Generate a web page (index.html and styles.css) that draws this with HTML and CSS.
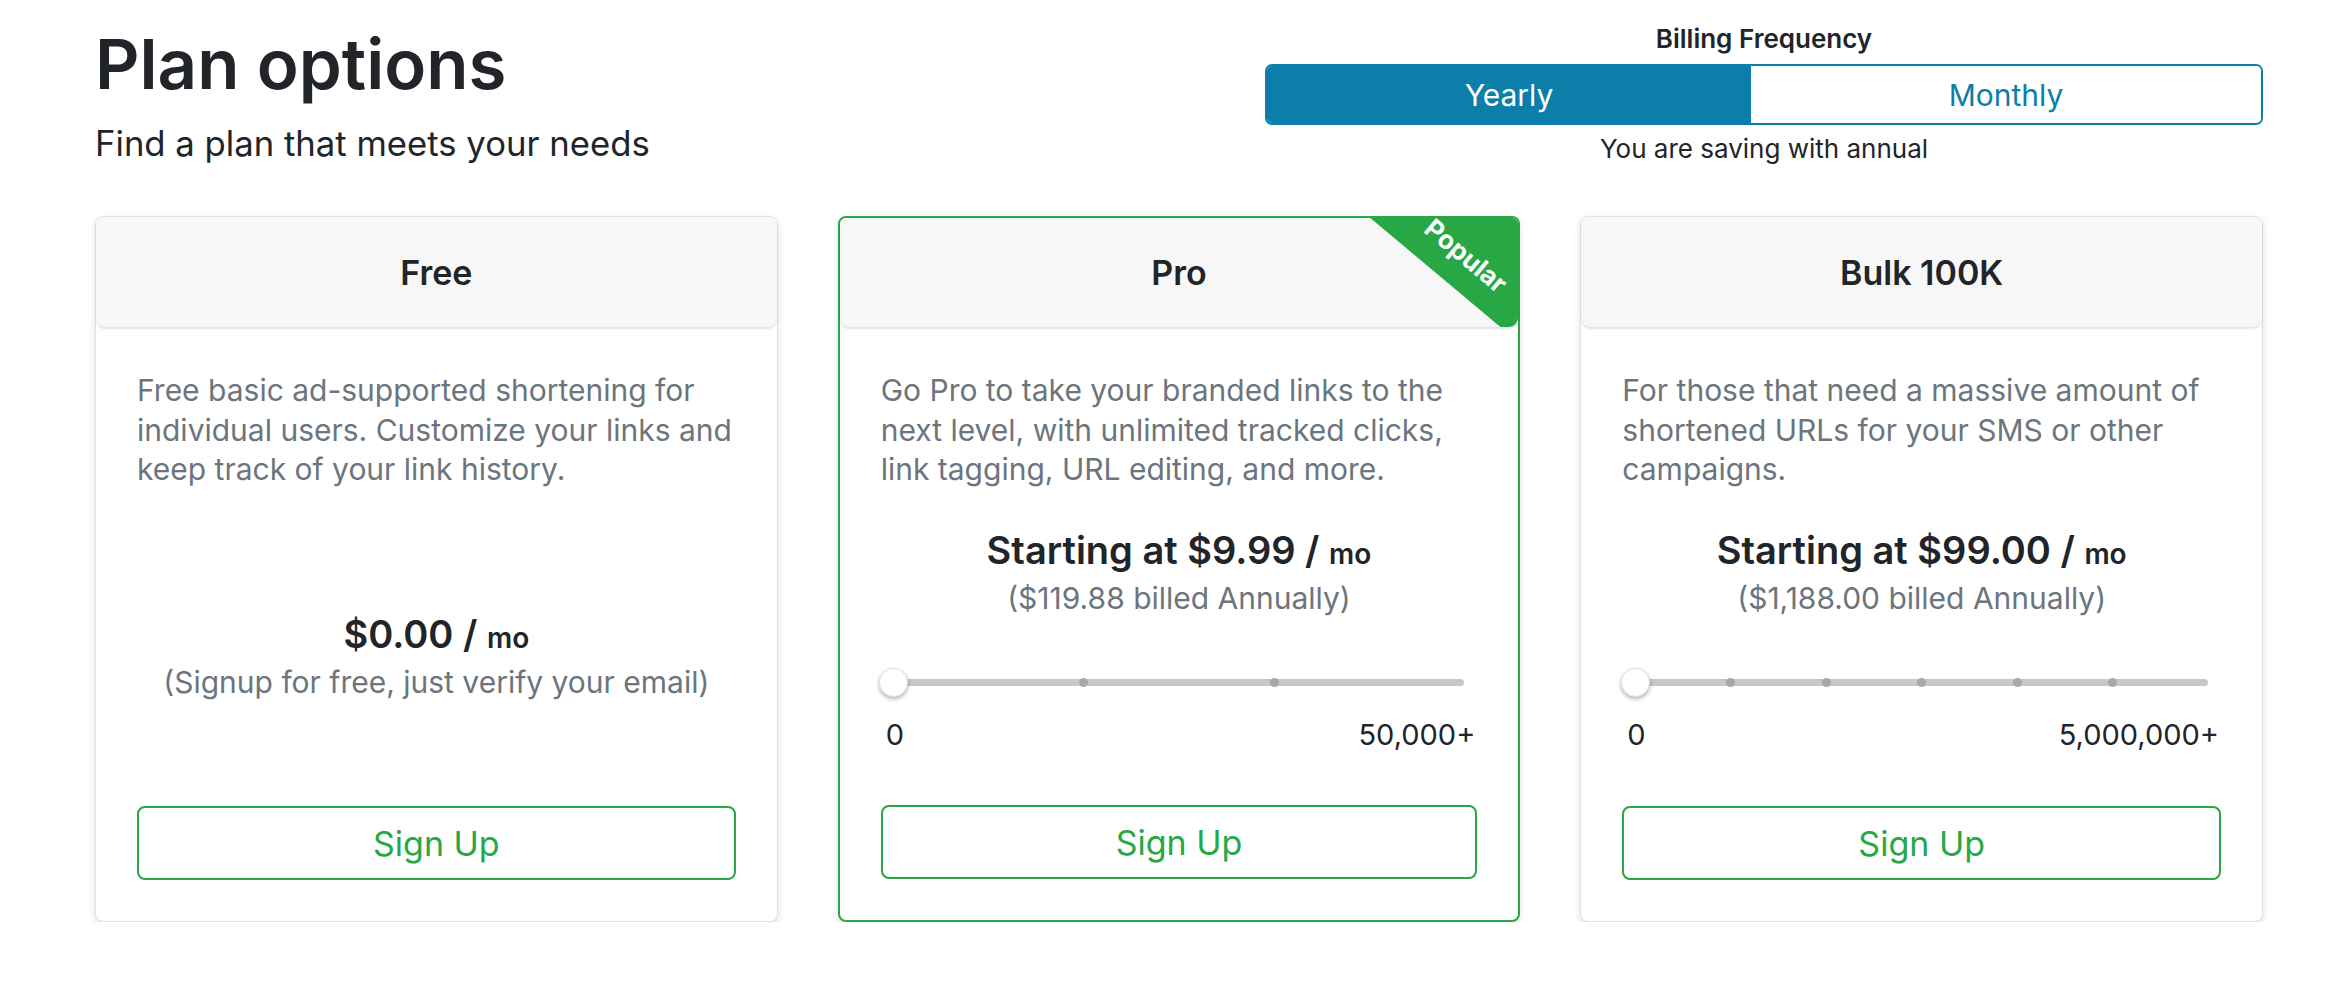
FILE: index.html
```html
<!DOCTYPE html>
<html lang="en">
<head>
<meta charset="utf-8">
<title>Plan options</title>
<link rel="stylesheet" href="styles.css">
</head>
<body>
<div class="page">
  <div class="top">
    <div class="intro">
      <h1 class="title">Plan options</h1>
      <p class="subtitle">Find a plan that meets your needs</p>
    </div>
    <div class="billing">
      <div class="billing-label">Billing Frequency</div>
      <div class="toggle">
        <div class="toggle-btn active">Yearly</div>
        <div class="toggle-btn">Monthly</div>
      </div>
      <div class="saving">You are saving with annual</div>
    </div>
  </div>

  <div class="plans">
    <div class="card">
      <div class="card-head">Free</div>
      <div class="card-body">
        <p class="desc">Free basic ad-supported shortening for individual users. Customize your links and keep track of your link history.</p>
        <div class="free-price">
          <div class="price">$0.00 / <span class="unit">mo</span></div>
          <div class="billed">(Signup for free, just verify your email)</div>
        </div>
        <div class="signup">Sign Up</div>
      </div>
    </div>

    <div class="card featured">
      <div class="card-head">Pro
        <div class="ribbon"></div>
      </div>
      <div class="ribbon-label">Popular</div>
      <div class="card-body">
        <p class="desc">Go Pro to take your branded links to the next level, with unlimited tracked clicks, link tagging, URL editing, and more.</p>
        <div class="price tier">Starting at $9.99 / <span class="unit">mo</span></div>
        <div class="billed">($119.88 billed Annually)</div>
        <div class="slider">
          <div class="track">
            <span class="tick" style="left:33.333%"></span>
            <span class="tick" style="left:66.667%"></span>
            <span class="thumb"></span>
          </div>
        </div>
        <div class="range-labels"><span>0</span><span>50,000+</span></div>
        <div class="signup">Sign Up</div>
      </div>
    </div>

    <div class="card">
      <div class="card-head">Bulk 100K</div>
      <div class="card-body">
        <p class="desc">For those that need a massive amount of shortened URLs for your SMS or other campaigns.</p>
        <div class="price tier">Starting at $99.00 / <span class="unit">mo</span></div>
        <div class="billed">($1,188.00 billed Annually)</div>
        <div class="slider">
          <div class="track">
            <span class="tick" style="left:16.667%"></span>
            <span class="tick" style="left:33.333%"></span>
            <span class="tick" style="left:50%"></span>
            <span class="tick" style="left:66.667%"></span>
            <span class="tick" style="left:83.333%"></span>
            <span class="thumb"></span>
          </div>
        </div>
        <div class="range-labels"><span>0</span><span>5,000,000+</span></div>
        <div class="signup">Sign Up</div>
      </div>
    </div>
  </div>
</div>
</body>
</html>
```

FILE: styles.css
```css
* { box-sizing: border-box; }

body {
  margin: 0;
  background: #ffffff;
  font-family: Inter, "Noto Sans", sans-serif;
  color: #212529;
}

.page {
  width: 2332px;
  padding: 0 69px 0 95px;
}

.top {
  display: flex;
  justify-content: space-between;
  align-items: flex-start;
}

.title {
  margin: 21px 0 0;
  font-size: 69px;
  line-height: 86px;
  font-weight: 600;
}

.subtitle {
  margin: 15px 0 0;
  font-size: 34.7px;
  line-height: 42px;
  font-weight: 400;
}

.billing {
  width: 998px;
  padding-top: 23px;
  display: flex;
  flex-direction: column;
  align-items: center;
}

.billing-label {
  font-size: 26px;
  line-height: 32px;
  font-weight: 600;
}

.toggle {
  margin-top: 9px;
  width: 100%;
  height: 61px;
  display: flex;
  border: 2px solid #0b7eaa;
  border-radius: 7px;
  overflow: hidden;
}

.toggle-btn {
  flex: 1 1 auto;
  display: flex;
  align-items: center;
  justify-content: center;
  font-size: 30px;
  color: #0b7eaa;
  background: #ffffff;
}

.toggle-btn.active {
  background: #0b7eaa;
  color: #ffffff;
}

.saving {
  margin-top: 8px;
  font-size: 26px;
  line-height: 31px;
}

.plans {
  margin-top: 52px;
  display: grid;
  grid-template-columns: repeat(3, 1fr);
  gap: 60px;
}

.card {
  position: relative;
  height: 706px;
  display: flex;
  flex-direction: column;
  background: #ffffff;
  border: 1px solid #e1e1e1;
  border-radius: 8px;
  box-shadow: 0 3px 7px rgba(0, 0, 0, 0.13);
}

.card.featured {
  border: 2px solid #28a745;
}

.card-head {
  position: relative;
  flex: none;
  height: 110px;
  display: flex;
  align-items: center;
  justify-content: center;
  background: #f7f7f7;
  border-radius: 7px 7px 9px 9px;
  box-shadow: 0 2px 2px rgba(0, 0, 0, 0.11);
  overflow: hidden;
  font-size: 34px;
  font-weight: 600;
}

.featured .card-head {
  height: 109px;
  border-radius: 6px 6px 9px 9px;
}

.ribbon {
  position: absolute;
  top: 0;
  right: 0;
  width: 148px;
  height: 124px;
  background: #28a745;
  clip-path: polygon(0 0, 100% 0, 100% 100%);
}

.ribbon-label {
  position: absolute;
  top: 38px;
  right: 52px;
  transform: translate(50%, -50%) rotate(40deg);
  color: #ffffff;
  font-size: 26px;
  line-height: 26px;
  font-weight: 700;
}

.card-body {
  flex: 1;
  display: flex;
  flex-direction: column;
  padding: 44px 41px 41px;
}

.desc {
  margin: 0;
  font-size: 30px;
  line-height: 39.5px;
  color: #6c757d;
}

.free-price {
  margin-top: 121px;
}

.price {
  text-align: center;
  font-size: 38px;
  line-height: 46px;
  font-weight: 600;
}

.price.tier {
  margin-top: 37px;
}

.unit {
  font-size: 28px;
}

.billed {
  margin-top: 1px;
  text-align: center;
  font-size: 30px;
  line-height: 40px;
  color: #6c757d;
}

.slider {
  margin-top: 50px;
  height: 30px;
  padding: 0 13px;
  display: flex;
  align-items: center;
}

.track {
  position: relative;
  flex: 1;
  height: 7px;
  border-radius: 4px;
  background: #c8c8c8;
}

.tick {
  position: absolute;
  top: 50%;
  width: 9px;
  height: 9px;
  margin: -4.5px 0 0 -4.5px;
  border-radius: 50%;
  background: #a8a8a8;
}

.thumb {
  position: absolute;
  top: 50%;
  left: 0;
  width: 29px;
  height: 29px;
  margin: -14.5px 0 0 -14.5px;
  border-radius: 50%;
  background: #ffffff;
  border: 1px solid #e0e0e0;
  box-shadow: 0 2px 4px rgba(0, 0, 0, 0.3);
}

.range-labels {
  margin-top: 19px;
  display: flex;
  justify-content: space-between;
  padding: 0 2px 0 5px;
  font-size: 29px;
  line-height: 36px;
}

.signup {
  margin-top: auto;
  height: 74px;
  display: flex;
  align-items: center;
  justify-content: center;
  border: 2px solid #28a745;
  border-radius: 8px;
  color: #28a745;
  font-size: 34px;
  background: #ffffff;
}
```
